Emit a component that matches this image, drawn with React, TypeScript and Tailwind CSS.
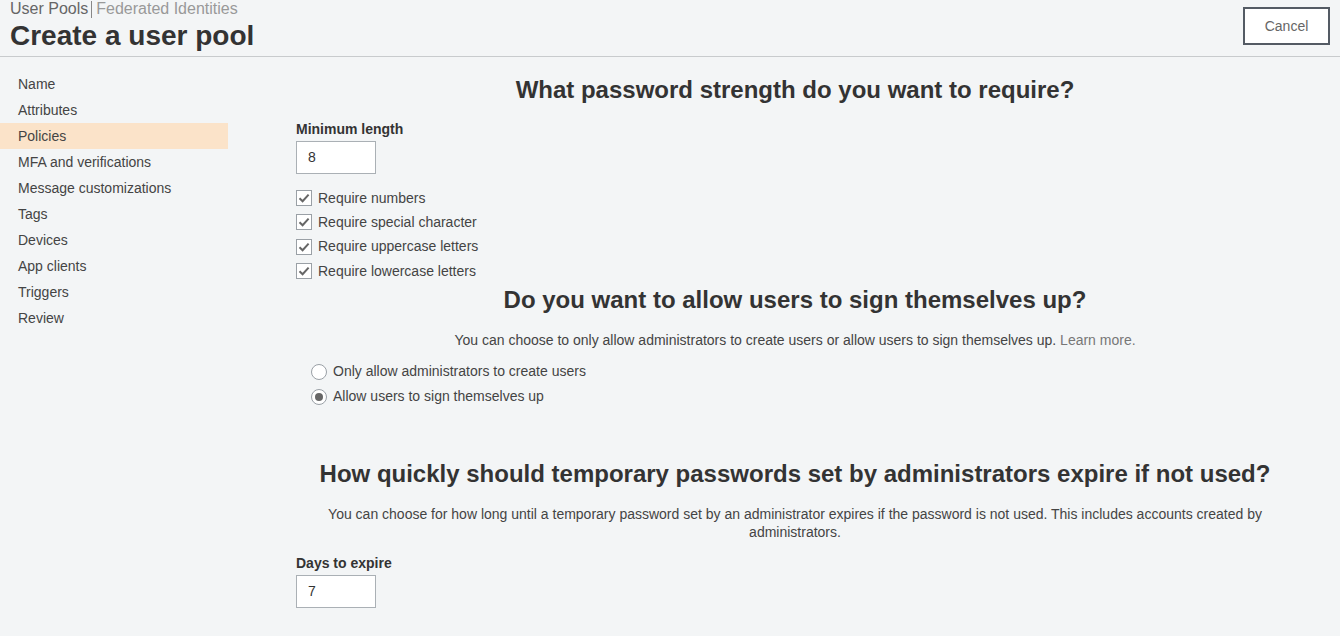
import React from "react";

const navItems = [
  "Name",
  "Attributes",
  "Policies",
  "MFA and verifications",
  "Message customizations",
  "Tags",
  "Devices",
  "App clients",
  "Triggers",
  "Review",
];

const checks = [
  "Require numbers",
  "Require special character",
  "Require uppercase letters",
  "Require lowercase letters",
];

function CheckBox() {
  return (
    <span className="w-4 h-4 border border-[#9aa0a6] bg-white flex items-center justify-center shrink-0">
      <svg width="12" height="12" viewBox="0 0 12 12">
        <path d="M1.5 6.2 L4.6 9.2 L10.6 2.6" fill="none" stroke="#666" strokeWidth="2" />
      </svg>
    </span>
  );
}

function Radio({ on }: { on?: boolean }) {
  return (
    <span className="w-[16px] h-[16px] rounded-full border border-[#9aa0a6] bg-white flex items-center justify-center shrink-0">
      {on && <span className="w-[8px] h-[8px] rounded-full bg-[#666]" />}
    </span>
  );
}

export default function App() {
  return (
    <div className="min-h-[636px] bg-[#f3f5f6] text-[#444] font-['Liberation_Sans',Arial,sans-serif]">
      {/* header */}
      <div className="h-[57px] border-b border-[#c8cbcd] flex justify-between pl-[10px] pr-[10px]">
        <div>
          <div className="text-[16px] leading-[18px] text-[#666] flex items-center">
            <span>User Pools</span>
            <span className="ml-[3px] mr-[4px] w-px h-[17px] bg-[#888]" />
            <span className="text-[#999]">Federated Identities</span>
          </div>
          <h1 className="text-[28px] leading-[36px] font-bold text-[#333]">Create a user pool</h1>
        </div>
        <div className="pt-[7px]">
          <button className="w-[87px] h-[38px] border-2 border-[#545b64] bg-white text-[14px] text-[#666]">
            Cancel
          </button>
        </div>
      </div>

      <div className="flex">
        {/* sidebar */}
        <div className="w-[228px] pt-[14px] shrink-0">
          {navItems.map((n) => (
            <div
              key={n}
              className={`h-[26px] leading-[26px] pl-[18px] text-[14px] text-[#444] ${
                n === "Policies" ? "bg-[#fbe3c9]" : ""
              }`}
            >
              {n}
            </div>
          ))}
        </div>

        {/* main */}
        <div className="w-[998px] ml-[68px] pb-6">
          <h2 className="mt-[19px] text-[24px] leading-[28px] font-bold text-[#333] text-center">
            What password strength do you want to require?
          </h2>
          <div className="mt-[16px] text-[14px] leading-[18px] font-bold text-[#333]">Minimum length</div>
          <div className="mt-[3px] w-[80px] h-[33px] bg-white border border-[#aab0b5] text-[14px] leading-[31px] pl-[11px] text-[#333]">
            8
          </div>
          <div className="mt-[12px]">
            {checks.map((c) => (
              <div key={c} className="h-[24.3px] flex items-center gap-[6px] text-[14px]">
                <CheckBox />
                <span>{c}</span>
              </div>
            ))}
          </div>

          <h2 className="mt-[3px] text-[24px] leading-[28px] font-bold text-[#333] text-center">
            Do you want to allow users to sign themselves up?
          </h2>
          <p className="mt-[17px] text-[14px] leading-[18px] text-center">
            You can choose to only allow administrators to create users or allow users to sign themselves up.{" "}
            <span className="text-[#777]">Learn more.</span>
          </p>
          <div className="mt-[10px] pl-[15px]">
            <div className="h-[25px] flex items-center gap-[6px] text-[14px]">
              <Radio />
              <span>Only allow administrators to create users</span>
            </div>
            <div className="h-[25px] flex items-center gap-[6px] text-[14px]">
              <Radio on />
              <span>Allow users to sign themselves up</span>
            </div>
          </div>

          <h2 className="mt-[51px] text-[24px] leading-[28px] font-bold text-[#333] text-center">
            How quickly should temporary passwords set by administrators expire if not used?
          </h2>
          <p className="mt-[17px] text-[14px] leading-[18px] text-center px-[20px]">
            You can choose for how long until a temporary password set by an administrator expires if the password is
            not used. This includes accounts created by administrators.
          </p>
          <div className="mt-[13px] text-[14px] leading-[18px] font-bold text-[#333]">Days to expire</div>
          <div className="mt-[3px] w-[80px] h-[33px] bg-white border border-[#aab0b5] text-[14px] leading-[31px] pl-[11px] text-[#333]">
            7
          </div>
        </div>
      </div>
    </div>
  );
}
